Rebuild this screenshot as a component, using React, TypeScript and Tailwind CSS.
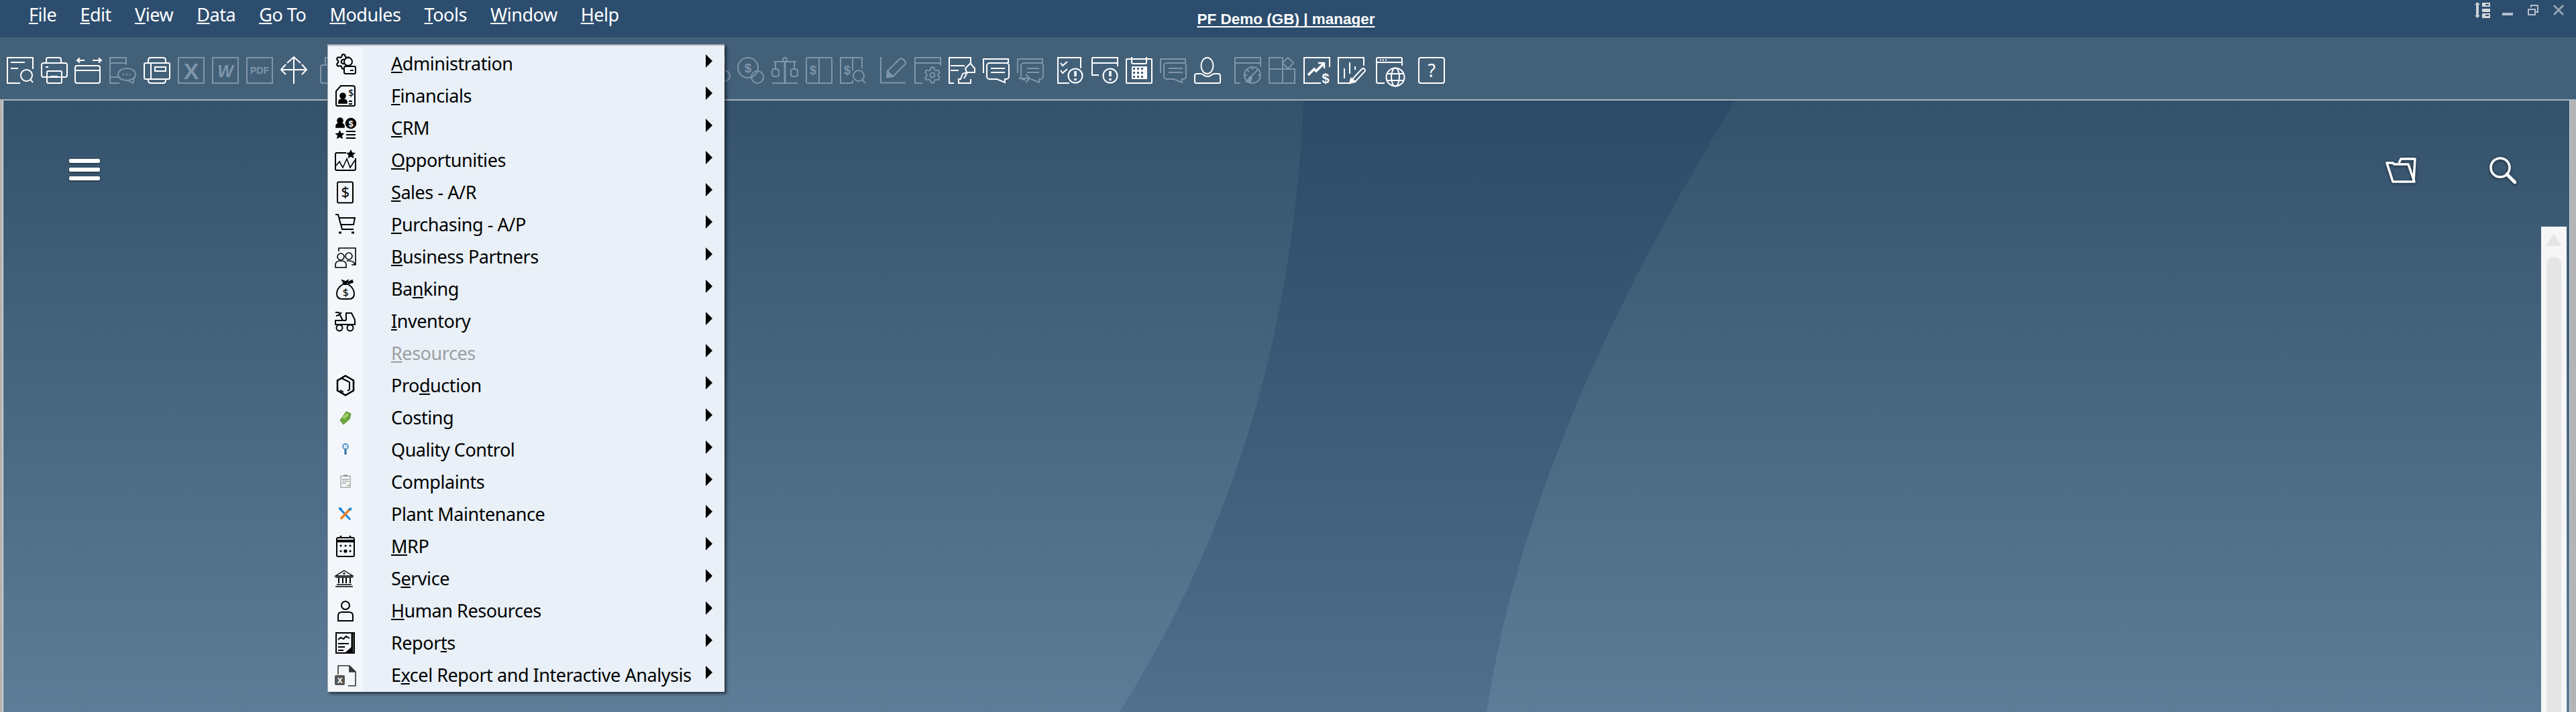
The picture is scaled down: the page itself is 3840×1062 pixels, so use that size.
import type { ReactNode } from "react";
import { Settings } from "lucide-react";

const topMenu = ["File", "Edit", "View", "Data", "Go To", "Modules", "Tools", "Window", "Help"];

// u = index of the underlined letter, -1 for none
const menuItems: { label: string; u: number; icon?: ReactNode; off?: boolean }[] = [
  { label: "Administration", u: 0, icon: <AdminIcon /> },
  { label: "Financials", u: 0, icon: <FinancialsIcon /> },
  { label: "CRM", u: 0, icon: <CrmIcon /> },
  { label: "Opportunities", u: 0, icon: <OpportunitiesIcon /> },
  { label: "Sales - A/R", u: 0, icon: <SalesIcon /> },
  { label: "Purchasing - A/P", u: 0, icon: <CartIcon /> },
  { label: "Business Partners", u: 0, icon: <PartnersIcon /> },
  { label: "Banking", u: 2, icon: <BagIcon /> },
  { label: "Inventory", u: 0, icon: <InventoryIcon /> },
  { label: "Resources", u: 0, off: true },
  { label: "Production", u: 3, icon: <ProductionIcon /> },
  { label: "Costing", u: -1, icon: <CostingIcon /> },
  { label: "Quality Control", u: -1, icon: <QualityIcon /> },
  { label: "Complaints", u: -1, icon: <ComplaintsIcon /> },
  { label: "Plant Maintenance", u: -1, icon: <PlantIcon /> },
  { label: "MRP", u: 0, icon: <CalendarIcon /> },
  { label: "Service", u: 1, icon: <BankIcon /> },
  { label: "Human Resources", u: 0, icon: <PersonIcon /> },
  { label: "Reports", u: 5, icon: <ReportsIcon /> },
  { label: "Excel Report and Interactive Analysis", u: 1, icon: <ExcelIcon /> },
];

function Tool({ on, className, children }: { on?: boolean; className?: string; children: ReactNode }) {
  return (
    <svg
      viewBox="0 0 40 40"
      fill="none"
      stroke="currentColor"
      strokeWidth="2"
      className={`w-[40px] h-[40px] shrink-0 overflow-visible ${on ? "text-white" : "text-[#7f95a9]"} ${className ?? ""}`}
    >
      {children}
    </svg>
  );
}

function Money({ x, y, size = 16 }: { x: number; y: number; size?: number }) {
  return (
    <text x={x} y={y} fontSize={size} fontWeight="700" textAnchor="middle" fill="currentColor" stroke="none" fontFamily="'Liberation Sans', sans-serif">
      $
    </text>
  );
}

function Toolbar() {
  return (
    <div className="flex items-start gap-[11px] h-[94px] shrink-0 pt-[29px] pl-[10px] bg-[#436079] border-b-2 border-[#a9b5bf]">
      <Tool on>
        <path d="M20 39H1V1h38v17M6 8h21M6 17h11" />
        <circle cx="29.5" cy="27.5" r="8.5" />
        <path d="M35.5 33.5 39 38" />
      </Tool>
      <Tool on>
        <path d="M8 9V4a3 3 0 0 1 3-3h16a3 3 0 0 1 3 3v5" />
        <rect x="1" y="9" width="38" height="21" rx="3" />
        <rect x="9" y="21" width="22" height="18" rx="2" />
        <path d="M14 29h11M7 15h4" />
      </Tool>
      <Tool on>
        <path d="M12 5H1M5 1.500 1 5l4 3.500M24 5h13M33 1.500 37 5l-4 3.500" transform="translate(2 0)" />
        <rect x="0" y="13" width="37" height="26" rx="3" />
        <path d="M0 20h37" />
      </Tool>
      <Tool>
        <path d="M1 30V1h24v11M1 9h24M1 30v9h14M1 30h14" />
        <ellipse cx="26" cy="26" rx="13" ry="9" />
        <path d="M28 35l7 4 3-10" />
        <path d="M20 26h1.500M25 26h1.500M30 26h1.500" strokeWidth="3" />
      </Tool>
      <Tool on>
        <path d="M7 8V5q0-4 4-4h18q4 0 4 4v3M7 34v1q0 4 4 4h18q4 0 4-4v-1" />
        <rect x="1" y="9" width="38" height="24" rx="2" />
        <path d="M11 9v24" />
        <rect x="17" y="15" width="16" height="6" />
      </Tool>
      <Tool>
        <rect x="1" y="1" width="38" height="38" />
        <text x="20" y="33" fontSize="34" fontWeight="700" textAnchor="middle" fill="currentColor" stroke="none" fontFamily="'Liberation Sans', sans-serif">X</text>
      </Tool>
      <Tool>
        <rect x="1" y="1" width="38" height="38" />
        <text x="20" y="30" fontSize="25" fontWeight="700" fontStyle="italic" textAnchor="middle" fill="currentColor" stroke="none" fontFamily="'Liberation Sans', sans-serif">W</text>
      </Tool>
      <Tool>
        <rect x="1" y="1" width="38" height="38" />
        <text x="20" y="25" fontSize="14" fontWeight="700" textAnchor="middle" fill="currentColor" stroke="none" fontFamily="'Liberation Sans', sans-serif">PDF</text>
      </Tool>
      <Tool on>
        <path d="M20 0v40M1 19h38M10 9l10-9 10 9M8 11l-7 8 7 7M32 11l7 8-7 7" />
      </Tool>
      <Tool className="ml-[8px]">
        <path d="M8 12V1h24v11" />
        <rect x="1" y="12" width="38" height="27" rx="3" />
      </Tool>
      <Tool className="ml-[520px]">
        <path d="M32 0v10" />
        <circle cx="32" cy="28" r="8" />
      </Tool>
      <Tool>
        <circle cx="16" cy="16" r="15" />
        <circle cx="30" cy="30" r="9" />
        <Money x={16} y={23} size={19} />
      </Tool>
      <Tool>
        <path d="M1 39h38M3 7h34" />
        <path d="M20 7v32" strokeWidth="3" />
        <circle cx="20" cy="4" r="3" />
        <path d="M6 7v11M34 7v11" />
        <rect x="1" y="18" width="10" height="11" rx="3" />
        <rect x="29" y="18" width="10" height="11" rx="3" />
      </Tool>
      <Tool>
        <rect x="1" y="1" width="38" height="38" rx="1" />
        <path d="M20 1v38" />
        <Money x={11} y={26} size={18} />
      </Tool>
      <Tool>
        <path d="M33 17V1H1v38h18M19 1v19M19 35v4" />
        <Money x={11} y={26} size={18} />
        <circle cx="28" cy="28" r="8" />
        <path d="M33 34l5 5" />
      </Tool>
      <Tool className="ml-[9px]">
        <path d="M1 0v38.500h37" />
        <path d="M11 21 29 3q3-2 6 1l2 2q2 3 0 5L19 29l-9 1z" />
        <path d="M10 30l1-9 8 8z" fill="currentColor" />
      </Tool>
      <Tool>
        <path d="M12 39H1V1h38v12M1 9h38" />
        <svg x="13" y="13" width="28" height="28" viewBox="0 0 24 24" overflow="visible">
          <Settings width={24} height={24} strokeWidth={1.7} />
        </svg>
      </Tool>
      <Tool on>
        <path d="M8 39H1V1h32v9M3 13h21M3 20h12" />
        <path d="M33 9l-8 8 2 6-6 2-3 8h-3v6h18v-6" />
        <path d="M33 10l6 7v6H28l-5 9" />
      </Tool>
      <Tool on>
        <path d="M1 24V3h37v6" />
        <path d="M10 9h25a4 4 0 0 1 4 4v16a4 4 0 0 1-4 4h-2v5l-12-5H10a4 4 0 0 1-4-4V13a4 4 0 0 1 4-4z" />
        <path d="M12 17h21M12 23h21" />
      </Tool>
      <Tool>
        <path d="M1 24V3h37v6" />
        <path d="M12 34h-2a4 4 0 0 1-4-4V13a4 4 0 0 1 4-4h25a4 4 0 0 1 4 4v16a4 4 0 0 1-4 4h-2v5l-12-5" />
        <path d="M15 17h18M15 23h18M2 32h17M13 26l6 6-6 6" />
      </Tool>
      <Tool on className="ml-[9px]">
        <path d="M18 39H1V1h34v16" />
        <path d="M5 9l3 4 7-6M5 20l3 4 7-6" />
        <circle cx="27" cy="28" r="10.500" />
        <path d="M27 21v8M27 32v3" strokeWidth="3.500" />
      </Tool>
      <Tool on>
        <path d="M1 1h38v13M1 9h38M1 1v26h10" />
        <circle cx="28" cy="28" r="10.500" />
        <path d="M28 21v8M28 32v3" strokeWidth="3.500" />
      </Tool>
      <Tool on>
        <rect x="1" y="3" width="38" height="36" rx="1" />
        <path d="M9 0v8a2 2 0 0 0 2 2h18a2 2 0 0 0 2-2V0" />
        <rect x="9" y="14" width="23" height="19" fill="currentColor" stroke="none" />
        <path d="M11 16h3v3h-3zM17 16h3v3h-3zM23 16h3v3h-3zM11 22h3v3h-3zM17 22h3v3h-3zM23 22h3v3h-3zM11 28h3v3h-3zM17 28h3v3h-3zM23 28h3v3h-3z" fill="#436079" stroke="none" />
      </Tool>
      <Tool>
        <path d="M1 24V3h37v6" />
        <path d="M10 9h25a4 4 0 0 1 4 4v16a4 4 0 0 1-4 4h-2v5l-12-5H10a4 4 0 0 1-4-4V13a4 4 0 0 1 4-4z" />
        <path d="M13 17h21M13 23h21" />
      </Tool>
      <Tool on>
        <ellipse cx="19.500" cy="13" rx="9" ry="12" />
        <path d="M3 39h34a2 2 0 0 0 2-2V28a3 3 0 0 0-3-3h-6c-3 0-5 4-10 4s-7-4-10-4H4a3 3 0 0 0-3 3v9a2 2 0 0 0 2 2z" />
      </Tool>
      <Tool className="ml-[9px]">
        <path d="M9 39H1V1h38v13M1 9h38" />
        <circle cx="27" cy="27" r="12" />
        <path d="M27 15v4M15 27h4M39 27h-4M19 19l3 3M35 19l-3 3M22 32l10-10" />
        <path d="M18 37h6l2-6-3-1z" fill="currentColor" />
      </Tool>
      <Tool>
        <path d="M21 1H1v38h38V18H1M21 1v38" />
        <rect x="23" y="3" width="12" height="12" rx="2" transform="rotate(45 29 9)" />
      </Tool>
      <Tool on className="ml-[1px]">
        <path d="M26 39H1V1h38v14" />
        <path d="M7 27l9-9 3 3 12-12" strokeWidth="3.500" />
        <path d="M22 9h9v8" strokeWidth="2.500" />
        <Money x={33} y={39} size={20} />
      </Tool>
      <Tool on>
        <path d="M18 39H1V1h38v12M10 17v15M18 8v17M26 14v5" />
        <path d="M22 33l14-15q2-2 4 0t0 4L26 37z" />
        <path d="M18 39l2-7 6 5z" fill="currentColor" />
      </Tool>
      <Tool on className="ml-[6px]">
        <path d="M13 39H3a2 2 0 0 1-2-2V3a2 2 0 0 1 2-2h34a2 2 0 0 1 2 2v10M1 8h38" />
        <path d="M6 4.500h2M10 4.500h2M14 4.500h2" />
        <circle cx="29" cy="30" r="13.500" />
        <ellipse cx="29" cy="30" rx="6" ry="13.500" />
        <path d="M16.500 25h25M16.500 35h25" />
      </Tool>
      <Tool on className="ml-[12px]">
        <rect x="1" y="1" width="38" height="38" rx="3" />
        <text x="20" y="30" fontSize="27" textAnchor="middle" fill="currentColor" stroke="none" fontFamily="'Noto Sans', sans-serif">?</text>
      </Tool>
    </div>
  );
}

function Ic({ children }: { children: ReactNode }) {
  return (
    <svg viewBox="0 0 32 32" fill="none" stroke="#000" strokeWidth="1.600" className="w-[32px] h-[32px] overflow-visible">
      {children}
    </svg>
  );
}

function AdminIcon() {
  return (
    <Ic>
      <svg x="0" y="0" width="26" height="26" viewBox="0 0 24 24" overflow="visible">
        <Settings width={24} height={24} strokeWidth={2} color="#000" />
      </svg>
      <circle cx="20" cy="13" r="6" fill="#f3f7fb" strokeWidth="2" />
      <rect x="14" y="20" width="17" height="11" rx="2" fill="#f3f7fb" strokeWidth="2" />
      <path d="M23 26h5" strokeWidth="2" />
    </Ic>
  );
}
function FinancialsIcon() {
  return (
    <Ic>
      <path d="M9 1h18a3 3 0 0 1 3 3v25a2 2 0 0 1-2 2H4a2 2 0 0 1-2-2V9z" strokeWidth="2" />
      <circle cx="12" cy="16" r="4" fill="#000" />
      <path d="M6 27v-2q0-4 6-4t6 4v2z" fill="#000" />
      <path d="M21 24h5M21 28h5" strokeWidth="2" />
      <text x="24" y="17" fontSize="15" textAnchor="middle" fill="#000" stroke="none" fontFamily="'Noto Sans', sans-serif">$</text>
    </Ic>
  );
}
function CrmIcon() {
  return (
    <Ic>
      <circle cx="8" cy="5" r="4" fill="#000" />
      <path d="M2 15v-2q0-4 6-4t6 4v2z" fill="#000" />
      <circle cx="24" cy="9" r="7.500" fill="#000" />
      <text x="24" y="14" fontSize="13" fontWeight="700" textAnchor="middle" fill="#fff" stroke="none" fontFamily="'Liberation Sans', sans-serif">$</text>
      <path d="M7.500 19l2.200 4.500 4.800.5-3.600 3.200 1 5-4.400-2.500L3 32.200l1-5L.5 24l4.800-.5z" fill="#000" stroke="none" />
      <path d="M17 21h14M17 26h14M17 31h14" strokeWidth="2" />
    </Ic>
  );
}
function OpportunitiesIcon() {
  return (
    <Ic>
      <path d="M17 5H3a2 2 0 0 0-2 2v22a2 2 0 0 0 2 2h26a2 2 0 0 0 2-2V13" strokeWidth="2" />
      <path d="M24 0l2.200 4.500 4.800.5-3.600 3.200 1 5-4.400-2.500-4.400 2.500 1-5L17 5l4.800-.5z" fill="#000" stroke="none" />
      <path d="M2 24l5-6 5 9 6-13 5 13 7-11" />
    </Ic>
  );
}
function SalesIcon() {
  return (
    <Ic>
      <rect x="4" y="0.500" width="23" height="31" rx="2" strokeWidth="2" />
      <text x="15.500" y="23" fontSize="22" textAnchor="middle" fill="#000" stroke="none" fontFamily="'Noto Sans', sans-serif">$</text>
    </Ic>
  );
}
function CartIcon() {
  return (
    <Ic>
      <path d="M1 1h4l6 22h17M6 6h24l-2 10H9" strokeWidth="2" />
      <path d="M6 28h4M25 28h4" strokeWidth="3" />
    </Ic>
  );
}
function PartnersIcon() {
  return (
    <Ic>
      <path d="M6 8V3h25v25h-6" />
      <circle cx="9" cy="16" r="5" />
      <path d="M1 32v-4q0-6 8-6t8 6v4z" />
      <circle cx="21" cy="15" r="5" />
      <path d="M18 22h3q8 0 9 6" />
    </Ic>
  );
}
function BagIcon() {
  return (
    <Ic>
      <path d="M12 9Q3 15 3 23q0 8 8 8h10q8 0 8-8 0-8-9-14z" strokeWidth="2" />
      <path d="M11 3l5 2 4-2-3 6h-3zM20 6l6-3 1 3-6 2z" fill="#000" />
      <text x="16" y="27" fontSize="16" textAnchor="middle" fill="#000" stroke="none" fontFamily="'Noto Sans', sans-serif">$</text>
    </Ic>
  );
}
function InventoryIcon() {
  return (
    <Ic>
      <path d="M1 3l5 0 2 4 4 8 4 0M2 8l4-1 4-4" strokeWidth="2" />
      <path d="M17 15V4h8l5 10v7H1v-6h16" strokeWidth="2" />
      <circle cx="7" cy="26" r="4.500" strokeWidth="2" />
      <circle cx="23" cy="26" r="4.500" strokeWidth="2" />
    </Ic>
  );
}
function ProductionIcon() {
  return (
    <Ic>
      <path d="M16 1.500 28 8.500v15L16 30.500 4 23.500v-15z" strokeWidth="2.600" />
      <path d="M10 5l9 4.500 3 1.500v11l-3 2M8 23l5 3" strokeWidth="2" />
      <path d="M9 5.500 8 10v13" stroke="#f3f7fb" strokeWidth="0" />
    </Ic>
  );
}
function CostingIcon() {
  return (
    <Ic>
      <path d="M17 7l7 3-2 8-9 8-5-6z" fill="#6fa83c" stroke="#4f8a2a" strokeWidth="1" />
      <path d="M11 15l7-6 3 3-7 6z" fill="#a5d06a" stroke="none" />
    </Ic>
  );
}
function QualityIcon() {
  return (
    <Ic>
      <circle cx="16" cy="11" r="4" fill="#cfe6f5" stroke="#2f7fb4" strokeWidth="1.500" />
      <path d="M16 15v8" stroke="#2a6ea3" strokeWidth="3" />
    </Ic>
  );
}
function ComplaintsIcon() {
  return (
    <Ic>
      <rect x="9" y="7" width="14" height="17" fill="#f5f5f5" stroke="#7d8488" strokeWidth="1" />
      <rect x="13" y="5" width="6" height="3" fill="#9aa0a4" stroke="none" />
      <path d="M11 12h10M11 15h10M11 18h6" stroke="#7d8488" strokeWidth="1" />
      <path d="M18 21l2 1 2-3" stroke="#6fb24a" strokeWidth="1" />
    </Ic>
  );
}
function PlantIcon() {
  return (
    <Ic>
      <path d="M9 9l14 15" stroke="#1f86d6" strokeWidth="3" />
      <path d="M7 6l3 1 1 3-2 1-3-3z" fill="#1f86d6" stroke="#1f86d6" strokeWidth="1" />
      <path d="M22 9L9 23" stroke="#f07d1c" strokeWidth="3.500" />
      <path d="M20 9l4-3 1 4z" fill="#1f86d6" stroke="#1f86d6" strokeWidth="1" />
    </Ic>
  );
}
function CalendarIcon() {
  return (
    <Ic>
      <rect x="3" y="3" width="26" height="28" rx="2" strokeWidth="2" />
      <path d="M3 8h26" strokeWidth="4" />
      <path d="M9 0v3M23 0v3" strokeWidth="2.500" />
      <path d="M9 15h.1M16 15h.1M23 15h.1M9 23h.1M23 23h.1" strokeWidth="3" strokeLinecap="round" />
      <circle cx="16" cy="23" r="1.800" fill="#000" />
    </Ic>
  );
}
function BankIcon() {
  return (
    <Ic>
      <path d="M1 12L14 4l13 8z" strokeWidth="1.400" />
      <path d="M6 15v8M12 15v8M17 15v8M23 15v8" strokeWidth="2" />
      <path d="M1 14h26M3 25h22M1 28h26" strokeWidth="1.600" />
      <circle cx="14" cy="8.500" r="1.500" fill="#000" stroke="none" />
    </Ic>
  );
}
function PersonIcon() {
  return (
    <Ic>
      <circle cx="16" cy="8" r="6" strokeWidth="2" />
      <path d="M5 31v-8q0-5 6-5h10q6 0 6 5v8z" strokeWidth="2" />
    </Ic>
  );
}
function ReportsIcon() {
  return (
    <Ic>
      <rect x="2" y="1" width="27" height="30" strokeWidth="2" />
      <path d="M26 2v28" strokeWidth="3" />
      <path d="M5 11l4-3 4 2 4-4 5 3" strokeWidth="2" />
      <path d="M5 17h16M5 22h10M5 27h8" strokeWidth="2" />
      <path d="M17 30l8-7v7z" fill="#000" />
    </Ic>
  );
}
function ExcelIcon() {
  return (
    <Ic>
      <path d="M5 15V2h17l9 9v21H20" stroke="#333" />
      <path d="M22 2v9h9" fill="#333" stroke="#333" />
      <rect x="0" y="16" width="15" height="15" rx="2" fill="#555" stroke="none" />
      <text x="7.500" y="28" fontSize="14" fontWeight="700" textAnchor="middle" fill="#fff" stroke="none" fontFamily="'Liberation Sans', sans-serif">x</text>
    </Ic>
  );
}

function ModulesMenu() {
  return (
    <div className="absolute left-[488px] top-[66px] w-[592px] pt-[3px] pb-px bg-[#e9f0f7] border-t-2 border-l border-[#a6adb3] shadow-[3px_3px_4px_rgba(0,0,0,0.55)] font-['Noto_Sans',sans-serif] text-[27px] tracking-[-0.45px] text-black">
      {menuItems.map((m) => (
        <div key={m.label} className="flex items-center h-[48px]">
          <div className="flex items-center justify-center w-[52px] h-full bg-[#f3f7fb]">{m.icon}</div>
          <div className={`pl-[42px] leading-[48px] whitespace-pre ${m.off ? "text-[#9b9fa3]" : ""}`}>
            {m.u < 0 ? (
              m.label
            ) : (
              <>
                {m.label.slice(0, m.u)}
                <span className="underline decoration-2 underline-offset-[2px] [text-decoration-skip-ink:none]">{m.label[m.u]}</span>
                {m.label.slice(m.u + 1)}
              </>
            )}
          </div>
          <svg viewBox="0 0 10 20" className="w-[10px] h-[20px] ml-auto mr-[18px] mb-[8px]">
            <path d="M0 0l10 10L0 20z" fill="#000" />
          </svg>
        </div>
      ))}
    </div>
  );
}

export default function App() {
  return (
    <div className="relative flex flex-col h-[1062px] overflow-hidden bg-[#2c4d6e]">
      <div className="grid grid-cols-[1fr_auto_1fr] h-[56px] shrink-0 bg-[#2c4d6e] text-white">
        <div className="flex gap-[35px] pl-[43px] h-[43px] font-['Noto_Sans',sans-serif] text-[27px] leading-[43px] tracking-[-0.45px]">
          {topMenu.map((t) => (
            <div key={t}>
              <span className="underline decoration-2 underline-offset-[2px] [text-decoration-skip-ink:none]">{t[0]}</span>
              {t.slice(1)}
            </div>
          ))}
        </div>
        <div className="pt-[16px] pr-[6px] font-['Liberation_Sans',sans-serif] text-[22.5px] leading-[26px] font-bold underline decoration-2 underline-offset-[3px] [text-decoration-skip-ink:none]">
          PF Demo (GB) | manager
        </div>
        <div className="flex justify-end items-start pt-[3px] pr-[18px]">
          <svg viewBox="0 0 24 24" className="w-[24px] h-[24px] mr-[18px]">
            <path d="M5 0l4 4H7v16h2l-4 4-4-4h2V4H1z" fill="#c9ced3" />
            <path d="M12 1h12v6H12zM12 10h12v5H12zM12 17h12v7H12z" fill="#d6d8da" />
            <path d="M17 3h5v2h-5zM17 19h5v2h-5z" fill="#2c4d6e" />
          </svg>
          <svg viewBox="0 0 16 24" className="w-[16px] h-[24px] mr-[22px]">
            <path d="M0 16h16v4H0z" fill="#b5c0cc" />
          </svg>
          <svg viewBox="0 0 16 24" className="w-[16px] h-[24px] mr-[22px]" fill="none" stroke="#b5c0cc" strokeWidth="2">
            <path d="M5 8V5h10v10h-3" />
            <rect x="1" y="11" width="10" height="8" />
          </svg>
          <svg viewBox="0 0 16 24" className="w-[16px] h-[24px]" fill="none" stroke="#94a5b5" strokeWidth="3">
            <path d="M1 5l14 14M15 5L1 19" />
          </svg>
        </div>
      </div>

      <Toolbar />

      <div className="relative flex-1 flex border-l-4 border-r-[9px] border-[#b4b4b4] bg-gradient-to-b from-[#34526b] to-[#5d7c97] shadow-[inset_1px_0_0_#eeeeee,inset_-1px_0_0_#c9d0d6]">
        <svg viewBox="0 0 3827 912" preserveAspectRatio="none" className="absolute inset-0 w-full h-full">
          <defs>
            <linearGradient id="band" x1="0" y1="0" x2="0" y2="1">
              <stop offset="0" stopColor="#1f3f63" stopOpacity="0.38" />
              <stop offset="1" stopColor="#1f3f63" stopOpacity="0.2" />
            </linearGradient>
          </defs>
          <path d="M1939 0C1925 350 1830 650 1665 912L2212 912C2260 600 2400 300 2583 0Z" fill="url(#band)" />
        </svg>
        <div className="relative flex items-start justify-between w-full h-fit pt-[84px] pl-[99px] pr-[80px]">
          <div className="flex flex-col gap-[7px] w-[46px] pt-[3px]">
            <div className="h-[6px] rounded-[2px] bg-white shadow-[0_1px_3px_rgba(0,0,0,0.5)]" />
            <div className="h-[6px] rounded-[2px] bg-white shadow-[0_1px_3px_rgba(0,0,0,0.5)]" />
            <div className="h-[6px] rounded-[2px] bg-white shadow-[0_1px_3px_rgba(0,0,0,0.5)]" />
          </div>
          <div className="flex gap-[109px]">
            <svg viewBox="0 0 46 40" fill="none" stroke="#fff" strokeWidth="3.500" strokeLinejoin="round" className="w-[46px] h-[40px] drop-shadow-[0_1px_2px_rgba(0,0,0,0.5)]">
              <path d="M2 9h9l2 2h21l9 26H11z" />
              <path d="M20 9l3-6h21l-2 33" />
            </svg>
            <svg viewBox="0 0 40 40" fill="none" stroke="#fff" strokeWidth="3.500" className="w-[40px] h-[40px] drop-shadow-[0_1px_2px_rgba(0,0,0,0.5)]">
              <circle cx="16" cy="16" r="14" />
              <path d="M26 26l12 12" strokeWidth="5" strokeLinecap="round" />
            </svg>
          </div>
        </div>
        <div className="absolute right-[5px] top-[188px] bottom-0 flex flex-col items-center w-[38px] bg-[#f6f6f6] pt-[11px]">
          <div className="w-0 h-0 border-x-[12px] border-x-transparent border-b-[18px] border-b-[#e5e5e5]" />
          <div className="flex-1 w-[22px] mt-[16px] rounded-t-[11px] bg-[#e5e5e5]" />
        </div>
      </div>

      <ModulesMenu />
    </div>
  );
}
